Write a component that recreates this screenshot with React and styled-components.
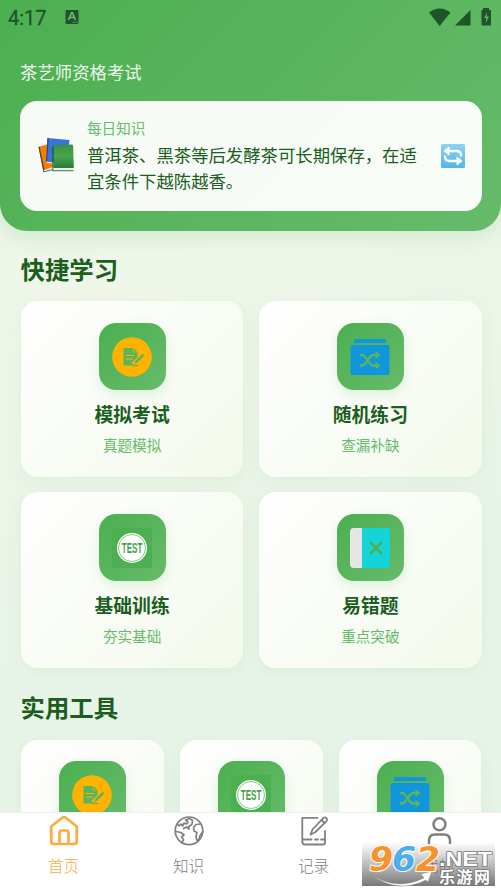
import React from 'react';
import styled, {createGlobalStyle} from 'styled-components';

const GlobalStyle = createGlobalStyle`
  * {
    box-sizing: border-box;
  }
  body {
    margin: 0;
    font-family: "Noto Sans CJK SC", sans-serif;
    overflow: hidden;
  }
  svg {
    display: block;
    flex: none;
    overflow: visible;
  }
`;

const Page = styled.div`
  position: relative;
  display: flex;
  flex-direction: column;
  height: 892px;
  overflow: hidden;
  background: #fff;
`;

const Content = styled.main`
  height: 812px;
  flex: none;
  overflow: hidden;
  background: linear-gradient(160deg, #e8f5e9 0%, #eef6e8 35%, #e9f4e8 65%, #e6f3e7 100%);
`;

const Header = styled.header`
  height: 231px;
  padding: 0 19px 0 20px;
  border-radius: 0 0 27px 27px;
  background: linear-gradient(135deg, #4caf50 0%, #66bb6a 100%);
  box-shadow: 0 4px 20px rgba(76, 175, 80, 0.2);
`;

const StatusBar = styled.div`
  display: flex;
  align-items: center;
  height: 34px;
  margin: 0 -11px 0 -12px;
  font-family: Roboto, sans-serif;
  font-size: 20px;
  color: #20542a;
`;

const Spacer = styled.div`
  flex: 1;
`;

const Time = styled.span`
  width: 57px;
  padding-top: 1px;
  -webkit-text-stroke: 0.3px #20542a;
`;

const AppName = styled.div`
  height: 67px;
  padding-top: 25px;
  font-size: 17.4px;
  line-height: 26px;
  color: rgba(255, 255, 255, 0.92);
`;

const TipCard = styled.section`
  display: flex;
  align-items: center;
  height: 110px;
  padding: 0 16px 0 18px;
  border-radius: 17px;
  background: rgba(255, 255, 255, 0.95);
`;

const TipBody = styled.div`
  width: 345px;
  margin: 0 8px 2px 12px;
`;

const TipLabel = styled.div`
  font-size: 14.6px;
  line-height: 22px;
  color: #66bb6a;
`;

const TipText = styled.div`
  width: 332px;
  padding-top: 3px;
  font-size: 17.36px;
  line-height: 26px;
  color: #1b5e20;
`;

const Heading = styled.h2`
  margin: 0;
  padding: ${props => props.$top}px 0 0 20.5px;
  height: ${props => props.$height}px;
  font-size: 24.4px;
  line-height: 36px;
  font-weight: 700;
  color: #1b5e20;
`;

const Grid = styled.div`
  display: grid;
  grid-template-columns: repeat(${props => props.$columns}, 1fr);
  gap: 15px 16px;
  padding: 0 19.500px 0 21px;
`;

const Card = styled.div`
  display: flex;
  flex-direction: column;
  align-items: center;
  height: 176px;
  padding-top: ${props => props.$pad || 22}px;
  border-radius: 17px;
  background: linear-gradient(135deg, #ffffff 0%, #f3f9ec 100%);
  box-shadow: 0 4px 16px rgba(76, 175, 80, 0.08);
`;

const IconBox = styled.div`
  display: flex;
  align-items: center;
  justify-content: center;
  width: 67px;
  height: 67px;
  flex: none;
  border-radius: 17px;
  background: linear-gradient(135deg, #4caf50 0%, #66bb6a 100%);
  box-shadow: 0 4px 12px rgba(76, 175, 80, 0.17);
`;

const CardTitle = styled.div`
  margin-top: 9px;
  font-size: 18.8px;
  line-height: 30px;
  font-weight: 700;
  color: #1b5e20;
`;

const CardSub = styled.div`
  margin-top: 4px;
  font-size: 14.6px;
  line-height: 24px;
  color: #66bb6a;
`;

const TabBar = styled.nav`
  display: grid;
  grid-template-columns: repeat(4, 1fr);
  height: 80px;
  padding-left: 1px;
  border-top: 1px solid #f0f0f0;
  background: #fff;
`;

const Tab = styled.div`
  display: flex;
  flex-direction: column;
  align-items: center;
  padding-top: 1px;
  font-size: 15.6px;
  line-height: 24px;
  font-weight: 300;
  color: ${props => props.$active ? '#ffa940' : '#808080'};
  span {
    margin-top: 5px;
  }
`;

// Site badge that floats above the tab bar
const Badge = styled.div`
  position: absolute;
  left: 362px;
  top: 842px;
  width: 133px;
  height: 44px;
  background: linear-gradient(rgba(112, 112, 112, 0) 0%, rgba(112, 112, 112, 0.45) 50%, rgba(112, 112, 112, 0.95) 100%);
`;

const BooksIcon = () => (
    <svg width="37" height="36" viewBox="0.500 1 37 36">
        <path d="M1 10L11 7l5 24-10 4z" fill="#f57c00"/>
        <path d="M1 10l1-.5L7 33l-1 2z" fill="#444"/>
        <path d="M6.500 33l9-3v2L7 34.600z" fill="#eee"/>
        <path d="M6 35l9-2.400" stroke="#444" strokeWidth=".8"/>
        <path d="M10 1l22 2-3 25-20-3z" fill="#3972dc"/>
        <path d="M10 1L8.500 25l1 .5L11.200 1z" fill="#244580"/>
        <path d="M9 24.500l6 1v1l-6-.7z" fill="#eee"/>
        <path d="M16 9.500Q15.500 8 17 8L34.500 7.500Q35.500 7.500 35.600 9L36.300 31H16z" fill="url(#book)"/>
        <path d="M16 8.500l-1.200 1.500L15 34h1z" fill="#19572c"/>
        <path d="M16 31.300h20V33H16z" fill="#eee"/>
        <path d="M15 33.300h21v.9H15z" fill="#236230"/>
        <defs>
            <linearGradient id="book" x2="0" y2="1">
                <stop stopColor="#399044"/>
                <stop offset=".5" stopColor="#4ba44f"/>
                <stop offset="1" stopColor="#247d35"/>
            </linearGradient>
        </defs>
    </svg>
);

const RefreshIcon = () => (
    <svg width="26" height="26" viewBox="0 0 26 26">
        <defs>
            <linearGradient id="refresh" x2="0" y2="1">
                <stop stopColor="#8fd2f5"/>
                <stop offset="1" stopColor="#55b5e6"/>
            </linearGradient>
        </defs>
        <rect x="1" y="1" width="24" height="24" rx="1.500" fill="url(#refresh)"/>
        <path d="M9 8h7.500q4.500 0 4.500 4.500" fill="none" stroke="#fff" strokeWidth="2.400" strokeLinecap="round"/>
        <path d="M9 4v8L4 8z" fill="#fff" stroke="#fff" strokeLinejoin="round"/>
        <path d="M17 18H9.500Q5 18 5 13.500" fill="none" stroke="#fff" strokeWidth="2.400" strokeLinecap="round"/>
        <path d="M17 14v8l5-4z" fill="#fff" stroke="#fff" strokeLinejoin="round"/>
    </svg>
);

const ExamIcon = () => (
    <svg width="40" height="40" viewBox="0 0 40 40">
        <circle cx="20" cy="20" r="19.800" fill="#ffb300"/>
        <path d="M11.500 11h10l4 4v5l-6 6 3 2.500H11.500z" fill="#5bb55a"/>
        <path d="M21.500 11v4h4" fill="none" stroke="#ffb300" strokeWidth=".7"/>
        <path d="M14 18.500h8M14 22h7" stroke="#ffb300" strokeWidth="1"/>
        <path d="M22 27l1-3 7.500-7.500 2 2L25 26z" fill="#5bb55a" stroke="#ffb300" strokeWidth=".5"/>
        <path d="M21 28.500h5" stroke="#5bb55a" strokeWidth="1.300"/>
    </svg>
);

const ShuffleIcon = () => (
    <svg width="40" height="40" viewBox="0 0 40 40">
        <path d="M4.500 2h31l.8 4H3.700z" fill="#1296db"/>
        <rect x=".5" y="8" width="39" height="30" rx="1.500" fill="#1296db"/>
        <g fill="none" stroke="#5bb55a" strokeWidth="2.400">
            <path d="M10 18h2c5 0 6 10.500 11.500 10.500h3"/>
            <path d="M10 28.500h2c5 0 6-10.500 11.500-10.500h3"/>
        </g>
        <path d="M25.500 14l5 4-5 4zM25.500 24.500l5 4-5 4z" fill="#5bb55a"/>
    </svg>
);

const TestIcon = () => (
    <svg width="40" height="40" viewBox="0 0 40 40">
        <rect width="40" height="40" rx="3" fill="#4caf50"/>
        <circle cx="20" cy="20" r="15" fill="#fff"/>
        <circle cx="20" cy="20" r="13.500" fill="none" stroke="#4caf50" strokeWidth=".7"/>
        <text x="9.800" y="24.800" fontFamily="Liberation Sans, sans-serif" fontSize="14" fontWeight="700"
              fill="#43a047" textLength="20.600"
              lengthAdjust="spacingAndGlyphs">TEST</text>
    </svg>
);

const MistakeIcon = () => (
    <svg width="40" height="40" viewBox="0 0 40 40">
        <path d="M12 0h25a3 3 0 0 1 3 3v34a3 3 0 0 1-3 3H12z" fill="#13d5d5"/>
        <path d="M12 0H4a4 4 0 0 0-4 4v32a4 4 0 0 0 4 4h8z" fill="#e6e6e6"/>
        <path d="M21 15l10 10M31 15L21 25" stroke="#4caf50" strokeWidth="2.600" strokeLinecap="round"/>
    </svg>
);

const HomeIcon = () => (
    <svg width="34" height="34" viewBox="0 0 34 34" fill="none" stroke="currentColor" strokeWidth="2.700"
         strokeLinejoin="round">
        <path d="M4.200 12.500L15.500 3.500q1.500-1 3 0L29.800 12.500V27.500q0 2.500-2.500 2.500H6.700Q4.200 30 4.200 27.500z"/>
        <path d="M12.500 30V19q0-2.500 2.500-2.500h4q2.500 0 2.500 2.500v11"/>
    </svg>
);

const GlobeIcon = () => (
    <svg width="34" height="34" viewBox="0 0 34 34" fill="none" stroke="currentColor" strokeWidth="1.700"
         strokeLinejoin="round" strokeLinecap="round">
        <circle cx="17" cy="16.800" r="13.800"/>
        <path d="M5.500 10l1.500 2 2-2 1.500 2 1.500-3 2.500 1 1.500-2-2.500-2 4-1.500 3 2-.5 4-3.500 2 .5 2.500-2.500-2-3 1.500"/>
        <path d="M4 17.500l5 1 3 2.500-2.500 2 2 2.500-1.500 3"/>
        <path d="M28.500 10l-4.500.5-2.500 3 .5 3.500 3 1.500-1 4 1 4 2-1 1-4 2.500-3.500"/>
    </svg>
);

const NoteIcon = () => (
    <svg width="34" height="34" viewBox="0 0 34 34" fill="none" stroke="currentColor" strokeWidth="1.800"
         strokeLinejoin="round" strokeLinecap="round">
        <path d="M20.500 3.800H5.300v24q0 2.700 2.700 2.700h18q2 0 2-2V17"/>
        <path d="M6 25.500h8.500M18 25.500h3M24 25.500h3.500"/>
        <path d="M13.500 20.500l2-5L26.500 3.800q1.800-1 3 .3t0 3L18.500 18z"/>
        <path d="M24.500 6l3 3"/>
    </svg>
);

const UserIcon = () => (
    <svg width="34" height="34" viewBox="0 0 34 34" fill="none" stroke="currentColor" strokeWidth="2.500"
         strokeLinecap="round">
        <circle cx="17.500" cy="10.300" r="6"/>
        <path d="M7 29v-2.500q0-6 6-6h9q6 0 6 6V29"/>
    </svg>
);

const StatusIcons = () => (
    <svg width="64" height="22" viewBox="0 0 64 22" fill="#20542a">
        <path d="M0 6.500Q10.700-1.500 21.500 6.500L10.700 20z"/>
        <path d="M41.500 4v15.500H26z"/>
        <path d="M54 2h6v2h2v15.500h-9.500V4H54z"/>
        <path d="M58.500 6l-3.500 6h2.500l-1 5.500 3.500-7h-2.500z" fill="#5eb760"/>
    </svg>
);

const study = [
    {title: '模拟考试', sub: '真题模拟', Icon: ExamIcon},
    {title: '随机练习', sub: '查漏补缺', Icon: ShuffleIcon},
    {title: '基础训练', sub: '夯实基础', Icon: TestIcon},
    {title: '易错题', sub: '重点突破', Icon: MistakeIcon},
];

const tools = [ExamIcon, TestIcon, ShuffleIcon];

const tabs = [
    {label: '首页', Icon: HomeIcon, active: true},
    {label: '知识', Icon: GlobeIcon},
    {label: '记录', Icon: NoteIcon},
    {label: '我的', Icon: UserIcon},
];

const App = () => (
    <Page>
        <GlobalStyle/>
        <Content>
            <Header>
                <StatusBar>
                    <Time>4:17</Time>
                    <svg width="14" height="14" viewBox="0 0 14 14">
                        <rect x=".5" width="13" height="14" rx="1" fill="#20542a"/>
                        <path d="M3.500 10L6.600 2.700h.8L10.500 10M4.800 7.500h4.400" fill="none" stroke="#72bd74"
                              strokeWidth="1.500"/>
                        <path d="M7.500 12.200h5" stroke="#72bd74" strokeDasharray="1 1"/>
                    </svg>
                    <Spacer/>
                    <StatusIcons/>
                </StatusBar>
                <AppName>茶艺师资格考试</AppName>
                <TipCard>
                    <BooksIcon/>
                    <TipBody>
                        <TipLabel>每日知识</TipLabel>
                        <TipText>普洱茶、黑茶等后发酵茶可长期保存，在适宜条件下越陈越香。</TipText>
                    </TipBody>
                    <RefreshIcon/>
                </TipCard>
            </Header>
            <Heading $top={20} $height={70}>快捷学习</Heading>
            <Grid $columns={2}>
                {study.map(({title, sub, Icon}) => (
                    <Card key={title}>
                        <IconBox><Icon/></IconBox>
                        <CardTitle>{title}</CardTitle>
                        <CardSub>{sub}</CardSub>
                    </Card>
                ))}
            </Grid>
            <Heading $top={21} $height={72}>实用工具</Heading>
            <Grid $columns={3}>
                {tools.map((Icon, i) => (
                    <Card key={i} $pad={21}>
                        <IconBox><Icon/></IconBox>
                    </Card>
                ))}
            </Grid>
        </Content>
        <TabBar>
            {tabs.map(({label, Icon, active}) => (
                <Tab key={label} $active={active}>
                    <Icon/>
                    <span>{label}</span>
                </Tab>
            ))}
        </TabBar>
        <Badge>
            <svg width="133" height="44" viewBox="0 0 133 44">
                <path d="M7 31Q33 50 62 36l-3-4 11-3-4 11-2-2Q34 53 7 31z" fill="#fff" stroke="#888" strokeWidth=".5"/>
                <g fontFamily="DejaVu Sans, sans-serif" fontWeight="700" fontStyle="italic" fontSize="33"
                   stroke="#fff" strokeWidth="2" paintOrder="stroke" strokeLinejoin="round">
                    <text x="7" y="28.500" fill="#f7922d" textLength="24" lengthAdjust="spacingAndGlyphs">9</text>
                    <text x="30" y="28.500" fill="#4daee8" textLength="24" lengthAdjust="spacingAndGlyphs">6</text>
                    <text x="54" y="28.500" fill="#f7922d" textLength="24" lengthAdjust="spacingAndGlyphs">2</text>
                </g>
                <g fill="#fff" stroke="#777" strokeWidth="1.600" paintOrder="stroke" strokeLinejoin="round">
                    <text x="77" y="23.500" fontFamily="Liberation Sans, sans-serif" fontWeight="700" fontSize="20"
                          textLength="53" lengthAdjust="spacingAndGlyphs">.NET</text>
                    <text x="77" y="40.500" fontFamily="Noto Sans CJK SC, sans-serif" fontWeight="700" fontSize="16"
                          textLength="51">乐游网</text>
                </g>
            </svg>
        </Badge>
    </Page>
);

export default App;
